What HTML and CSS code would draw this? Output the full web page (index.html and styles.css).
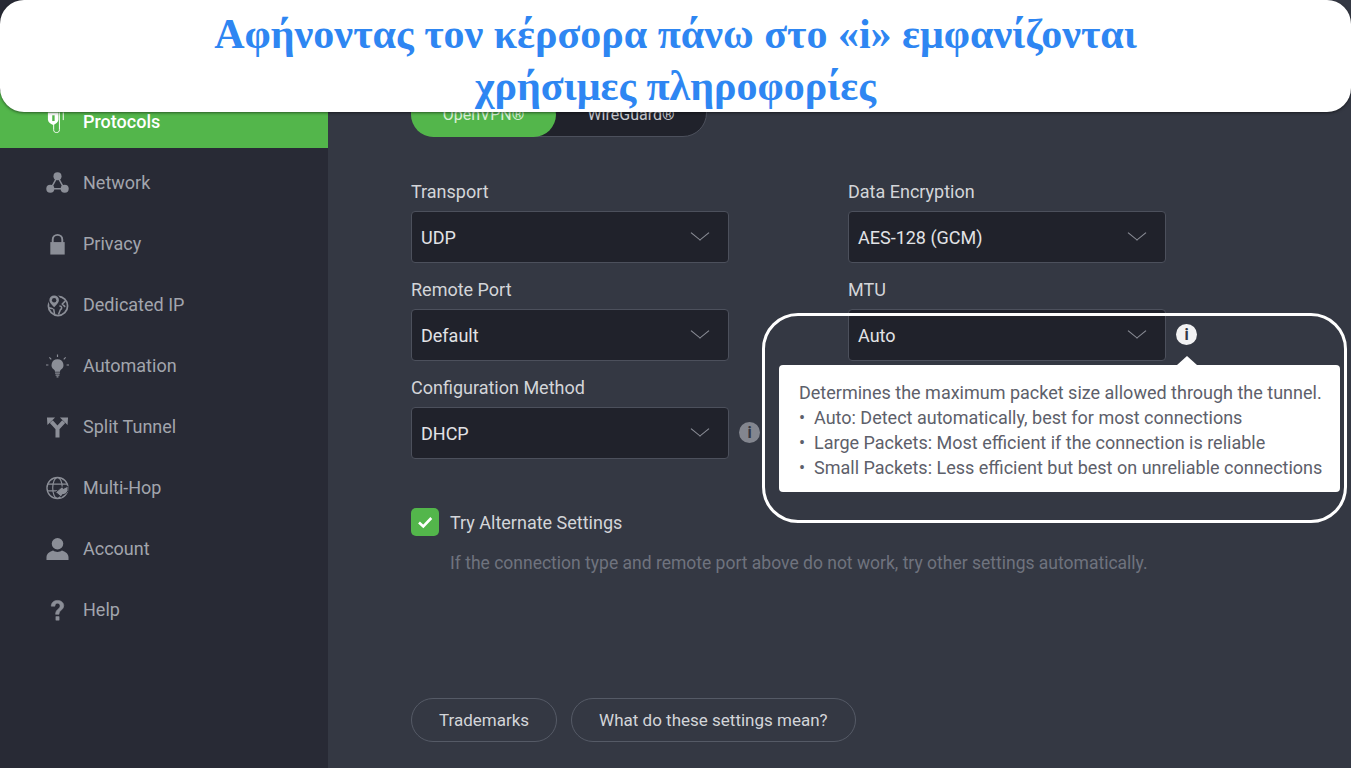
FILE: index.html
```html
<!DOCTYPE html>
<html lang="el">

<head>
    <meta charset="UTF-8">
    <meta name="viewport" content="width=device-width, initial-scale=1.0">
    <title>PIA Protocols</title>

    <link rel="stylesheet" href="styles.css">

</head>

<body>
    <div id="app">
        <!-- Sidebar -->
        <div class="sidebar">
            <div class="nav-item nav-active">
                <svg class="nav-icon" viewBox="0 0 24 24"><path d="M2 2h11v7c0 3-2.500 5-5.500 6C4.500 14 2 12 2 9z" fill="#fff"/><path d="M8 14v6c0 2 1 3 3 3s3-1 3-3V2M18 2v8" fill="none" stroke="#fff" stroke-width="1"/><path d="M6.500 5h2.500v6H6.500z" fill="#53b64b"/></svg>
                <span>Protocols</span>
            </div>
            <div class="nav-item">
                <svg class="nav-icon" viewBox="0 0 24 24"><path d="M12 5L5 18h14z" fill="none" stroke="#8b8e97" stroke-width="1.600"/><circle cx="12" cy="5" r="4.200" fill="#8b8e97"/><circle cx="4.500" cy="18" r="4.200" fill="#8b8e97"/><circle cx="19.500" cy="18" r="4.200" fill="#8b8e97"/></svg>
                <span>Network</span>
            </div>
            <div class="nav-item">
                <svg class="nav-icon" viewBox="0 0 24 24"><path d="M7 11V7.500a5 5 0 0 1 10 0V11" fill="none" stroke="#8b8e97" stroke-width="2"/><rect x="4.500" y="10" width="15" height="13" fill="#8b8e97"/></svg>
                <span>Privacy</span>
            </div>
            <div class="nav-item">
                <svg class="nav-icon" viewBox="0 0 24 24"><circle cx="12.500" cy="13" r="10" fill="none" stroke="#8b8e97" stroke-width="1.800"/><path d="M14 13c3 0 3 3 1 4l-2 5M20 8l-3 3 3 3M3 15l5 1 1 6" fill="none" stroke="#8b8e97" stroke-width="1.600"/><path d="M8.500 0.500a6.500 6.500 0 0 1 6.500 6.500c0 3-3.500 6.500-6.500 9.500C5.500 13.500 2 10 2 7A6.500 6.500 0 0 1 8.500 0.500z" fill="#282a35"/><path d="M8.500 2a5 5 0 0 1 5 5c0 2.400-2.700 5-5 7.400C6.200 12 3.500 9.400 3.500 7a5 5 0 0 1 5-5z" fill="#8b8e97"/><circle cx="8.500" cy="7" r="2.300" fill="#282a35"/></svg>
                <span>Dedicated IP</span>
            </div>
            <div class="nav-item">
                <svg class="nav-icon" viewBox="0 0 24 24"><path d="M12 5a6 6 0 0 1 3.500 11c-.6.500-.8 1.200-.9 2H9.400c-.1-.8-.3-1.500-.9-2A6 6 0 0 1 12 5z" fill="#8b8e97"/><path d="M9.500 19.500h5M10 21.500h4M11 23.300h2M12 0v2.500M3.500 3l2 2M20.500 3l-2 2M0 11h2.500M21.500 11H24" stroke="#8b8e97" stroke-width="1.200" fill="none"/></svg>
                <span>Automation</span>
            </div>
            <div class="nav-item">
                <svg class="nav-icon" viewBox="0 0 24 24"><path d="M12 23v-9.500L5.500 6.500M12 13.500l6.500-7" fill="none" stroke="#8b8e97" stroke-width="4.200"/><path d="M1 2h8.500L1.500 10zM23 2h-8.500l8 8z" fill="#8b8e97"/></svg>
                <span>Split Tunnel</span>
            </div>
            <div class="nav-item">
                <svg class="nav-icon" viewBox="0 0 24 24"><circle cx="12" cy="12" r="11" fill="none" stroke="#8b8e97" stroke-width="1.400"/><ellipse cx="12" cy="12" rx="5" ry="11" fill="none" stroke="#8b8e97" stroke-width="1.200"/><path d="M1.500 8h21M1.500 15h12" fill="none" stroke="#8b8e97" stroke-width="1.200"/><path d="M23 10l-5 2.500-1-2-7 6 6 5 1-2.500c2.500 0 5-1.500 6-4.500z" fill="#8b8e97" stroke="#282a35"/></svg>
                <span>Multi-Hop</span>
            </div>
            <div class="nav-item">
                <svg class="nav-icon" viewBox="0 0 24 24"><circle cx="12" cy="6.500" r="6" fill="#8b8e97"/><path d="M0.500 23.500v-3c0-4.500 5-6.500 7-7 1.300 1 2.800 1.500 4.500 1.500s3.200-.5 4.500-1.500c2 .5 7 2.500 7 7v3z" fill="#8b8e97"/></svg>
                <span>Account</span>
            </div>
            <div class="nav-item">
                <svg class="nav-icon" viewBox="0 0 24 24"><path d="M5.500 8c0-4 3-6 6.500-6s6.500 2 6.500 5.500c0 4.500-5 4.500-5 9h-3.500c0-5.500 4.700-5.500 4.700-8.800 0-1.700-1.200-2.700-2.800-2.700S9.500 6 9.300 8z" fill="#8b8e97" stroke="#8b8e97" stroke-width=".6"/><rect x="10" y="18.500" width="4" height="4.500" rx=".5" fill="#8b8e97"/></svg>
                <span>Help</span>
            </div>
        </div>

        <!-- Contenido -->
        <div class="content">
            <div class="toggle">
                <div class="toggle-option toggle-on">OpenVPN®</div>
                <div class="toggle-option">WireGuard®</div>
            </div>

            <div class="fields">
                <div class="field">
                    <label class="field-label">Transport</label>
                    <div class="select">UDP<span class="chevron"></span></div>
                </div>
                <div class="field">
                    <label class="field-label">Data Encryption</label>
                    <div class="select">AES-128 (GCM)<span class="chevron"></span></div>
                </div>
                <div class="field">
                    <label class="field-label">Remote Port</label>
                    <div class="select">Default<span class="chevron"></span></div>
                </div>
                <div class="field">
                    <label class="field-label">MTU</label>
                    <div class="select">Auto<span class="chevron"></span>
                        <span class="info info-on">i</span>
                    </div>
                </div>
                <div class="field">
                    <label class="field-label">Configuration Method</label>
                    <div class="select">DHCP<span class="chevron"></span>
                        <span class="info">i</span>
                    </div>
                </div>
            </div>

            <div class="alternate">
                <span class="checkbox">
                    <svg viewBox="0 0 28 28" width="28" height="28"><path d="M8 14.500l4.300 4 8-8.500" fill="none" stroke="#fff" stroke-width="2.600"/></svg>
                </span>
                <span class="alternate-label">Try Alternate Settings</span>
            </div>
            <p class="hint">If the connection type and remote port above do not work, try other settings automatically.</p>

            <div class="buttons">
                <div class="pill">Trademarks</div>
                <div class="pill">What do these settings mean?</div>
            </div>
        </div>
    </div>

    <!-- Encima de la app -->
    <div class="callout"></div>
    <div class="tooltip">
        <p>Determines the maximum packet size allowed through the tunnel.</p>
        <p>•&nbsp; Auto: Detect automatically, best for most connections</p>
        <p>•&nbsp; Large Packets: Most efficient if the connection is reliable</p>
        <p>•&nbsp; Small Packets: Less efficient but best on unreliable connections</p>
    </div>
    <div class="banner">
        <h1>Αφήνοντας τον κέρσορα πάνω στο «i» εμφανίζονται<br>χρήσιμες πληροφορίες</h1>
    </div>
</body>

</html>
```
FILE: styles.css
```css
* {
    box-sizing: border-box;
}

html, body {
    margin: 0;
    height: 768px;
    overflow: hidden;
}

body {
    position: relative;
    font-family: Roboto, sans-serif;
    background-color: #343843;
}

#app {
    display: flex;
    height: 768px;
}

/* Sidebar */
.sidebar {
    width: 328px;
    flex-shrink: 0;
    padding-top: 91px;
    background-color: #282a35;
}

.nav-item {
    display: flex;
    align-items: center;
    gap: 14px;
    height: 61px;
    padding-left: 46px;
    font-size: 18px;
    color: #a2a5ad;
}

.nav-active {
    height: 57px;
    margin-bottom: 4px;
    padding-top: 4px;
    background-color: #53b64b;
    color: #fff;
    font-weight: 500;
}

.nav-icon {
    width: 23px;
    height: 24px;
    flex-shrink: 0;
}

/* Contenido */
.content {
    flex: 1;
    display: flex;
    flex-direction: column;
    align-items: flex-start;
    padding: 92px 0 26px 83px;
}

.toggle {
    display: flex;
    width: 296px;
    height: 45px;
    border: 1px solid #4c505c;
    border-radius: 0 0 24px 24px;
    background-color: #20222b;
    font-size: 16px;
    color: #c9cbd0;
}

.toggle-option {
    display: flex;
    align-items: center;
    justify-content: center;
    width: 150px;
}

.toggle-on {
    width: 145px;
    margin: -1px 0 -1px -1px;
    border-radius: 0 24px 24px 24px;
    background-color: #53b64b;
    color: #d8efd6;
}

.fields {
    display: grid;
    grid-template-columns: 318px 318px;
    column-gap: 119px;
    row-gap: 16px;
    margin-top: 44px;
}

.field-label {
    display: block;
    height: 22px;
    margin-bottom: 8px;
    line-height: 22px;
    font-size: 18px;
    color: #d3d5d9;
}

.select {
    position: relative;
    display: flex;
    align-items: center;
    height: 52px;
    padding-left: 9px;
    border: 1px solid #4c505c;
    border-radius: 4px;
    background-color: #20222b;
    font-size: 18px;
    color: #e2e3e6;
}

.chevron {
    position: absolute;
    top: 15px;
    right: 22px;
    width: 12px;
    height: 12px;
    border-right: 1px solid #8b8e97;
    border-bottom: 1px solid #8b8e97;
    transform: rotate(45deg) skew(-6deg, -6deg);
}

.info {
    position: absolute;
    top: 14px;
    right: -32px;
    width: 21px;
    height: 21px;
    border-radius: 50%;
    background-color: #83868f;
    text-align: center;
    line-height: 21px;
    font-size: 16px;
    font-weight: 700;
    color: #343843;
}

.info-on {
    background-color: #f2f2f3;
}

.alternate {
    display: flex;
    align-items: center;
    gap: 11px;
    margin-top: 49px;
}

.checkbox {
    width: 28px;
    height: 28px;
    border-radius: 5px;
    background-color: #53b64b;
}

.checkbox svg {
    display: block;
}

.alternate-label {
    font-size: 18px;
    color: #d3d5d9;
}

.hint {
    margin: 15px 0 0 39px;
    line-height: 24px;
    font-size: 17.500px;
    color: #6f737e;
}

.buttons {
    display: flex;
    gap: 14px;
    margin-top: auto;
}

.pill {
    display: flex;
    align-items: center;
    height: 44px;
    padding: 0 27px;
    border: 1px solid #555a66;
    border-radius: 22px;
    font-size: 17px;
    color: #d3d5d9;
}

/* Recuadro blanco alrededor del MTU */
.callout {
    position: absolute;
    left: 762px;
    top: 313px;
    width: 585px;
    height: 210px;
    border: 3px solid #fff;
    border-radius: 36px;
}

.tooltip {
    position: absolute;
    left: 779px;
    top: 365px;
    width: 561px;
    height: 127px;
    padding: 15px 0 0 20px;
    border-radius: 4px;
    background-color: #fff;
    font-size: 18px;
    color: #5d606a;
}

.tooltip p {
    margin: 0;
    line-height: 25px;
    white-space: nowrap;
}

.tooltip::before {
    content: "";
    position: absolute;
    top: -9px;
    left: 398px;
    border-left: 10px solid transparent;
    border-right: 10px solid transparent;
    border-bottom: 9px solid #fff;
}

/* Banner */
.banner {
    position: absolute;
    left: 0;
    top: 0;
    width: 1351px;
    height: 112px;
    border-radius: 24px;
    background-color: #fff;
    box-shadow: 0 1px 3px rgba(0, 0, 0, 0.5);
}

.banner h1 {
    margin: 0;
    padding-top: 8px;
    text-align: center;
    line-height: 52px;
    font-family: "Liberation Serif", serif;
    font-size: 42px;
    font-weight: 700;
    color: #2e86f2;
}
```
